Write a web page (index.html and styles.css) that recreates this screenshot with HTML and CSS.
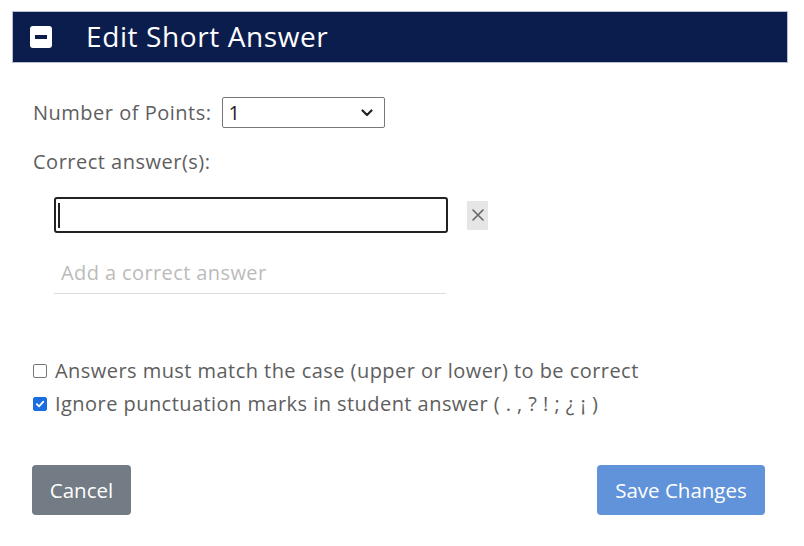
FILE: index.html
```html
<!DOCTYPE html>
<html>
<head>
<meta charset="utf-8">
<link rel="stylesheet" href="styles.css">
</head>
<body>
<div class="dialog">
  <div class="header">
    <span class="collapse"><span class="bar"></span></span>
    <span class="title">Edit Short Answer</span>
  </div>
  <div class="body">
    <div class="row points">
      <label class="label">Number of Points:</label>
      <div class="select">
        <span>1</span>
        <svg class="chev" width="12" height="8" viewBox="0 0 12 8"><path d="M1.5 1.5 L6 6 L10.5 1.5" fill="none" stroke="#222" stroke-width="2.2" stroke-linecap="round" stroke-linejoin="round"/></svg>
      </div>
    </div>
    <div class="label correct">Correct answer(s):</div>
    <div class="answers">
      <div class="answer-row">
        <div class="answer-input"><span class="caret"></span></div>
        <span class="remove"><svg width="12" height="12" viewBox="0 0 12 12"><path d="M1 1 L11 11 M11 1 L1 11" stroke="#666" stroke-width="1.6" stroke-linecap="round"/></svg></span>
      </div>
      <div class="add">Add a correct answer</div>
    </div>
    <div class="checks">
      <label class="check"><span class="box"></span>Answers must match the case (upper or lower) to be correct</label>
      <label class="check"><span class="box on"><svg width="10" height="10" viewBox="0 0 10 10"><path d="M1.8 5.2 L4 7.3 L8.3 2.6" fill="none" stroke="#fff" stroke-width="1.8" stroke-linecap="round" stroke-linejoin="round"/></svg></span>Ignore punctuation marks in student answer ( . , ? ! ; ¿ ¡ )</label>
    </div>
    <div class="actions">
      <button class="btn cancel">Cancel</button>
      <button class="btn save">Save Changes</button>
    </div>
  </div>
</div>
</body>
</html>
```
FILE: styles.css
```css
html, body {
  margin: 0;
  padding: 0;
  background: #fff;
}
body {
  font-family: "Open Sans", "Noto Sans", sans-serif;
  color: #5e5e5e;
}
.dialog {
  padding: 12px 17px 0 13px;
}
.header {
  height: 50px;
  background: #0b1d4d;
  display: flex;
  align-items: center;
  padding-left: 17px;
  box-shadow: 0 0 0 1px #b8c0d0;
}
.collapse {
  width: 22px;
  height: 22px;
  background: #fff;
  border-radius: 3px;
  display: flex;
  align-items: center;
  justify-content: center;
}
.bar {
  width: 12px;
  height: 4px;
  background: #0b1d4d;
}
.title {
  color: #fff;
  font-size: 28px;
  letter-spacing: 0.6px;
  margin-left: 34px;
  line-height: 1;
  margin-top: -2px;
}
.body {
  padding: 35px 0 0 20px;
}
.row {
  display: flex;
  align-items: center;
}
.label {
  font-size: 20px;
  letter-spacing: 0.5px;
  color: #5e5e5e;
}
.select {
  margin-left: 11px;
  height: 29px;
  border: 1px solid #777;
  border-radius: 2px;
  display: flex;
  align-items: center;
  justify-content: space-between;
  padding: 0 11px 0 5px;
  box-sizing: content-box;
  width: 145px;
  font-size: 20px;
  color: #222;
}
.chev {
  display: block;
}
.correct {
  margin-top: 20px;
}
.answers {
  margin-top: 22px;
  padding-left: 21px;
}
.answer-row {
  display: flex;
  align-items: center;
}
.answer-input {
  width: 388px;
  height: 32px;
  border: 2px solid #222;
  border-radius: 3px;
  display: flex;
  align-items: center;
  padding-left: 2px;
}
.caret {
  width: 2px;
  height: 25px;
  background: #222;
}
.remove {
  margin-left: 19px;
  width: 21px;
  height: 29px;
  background: #e6e6e6;
  display: flex;
  align-items: center;
  justify-content: center;
}
.add {
  margin-top: 26px;
  width: 385px;
  padding: 0 0 6px 7px;
  border-bottom: 1px solid #ddd;
  color: #bbb;
  font-size: 20px;
  letter-spacing: 0.4px;
  line-height: 28px;
}
.checks {
  margin-top: 63px;
  display: flex;
  flex-direction: column;
  gap: 6px;
}
.check {
  display: flex;
  align-items: center;
  font-size: 20px;
  letter-spacing: 0.45px;
  line-height: 27px;
  color: #5e5e5e;
}
.box {
  width: 12px;
  height: 12px;
  border: 1px solid #777;
  border-radius: 2px;
  margin-right: 8px;
  display: flex;
  align-items: center;
  justify-content: center;
  flex: none;
}
.box.on {
  background: #1a6fe0;
  border-color: #1a6fe0;
}
.actions {
  margin-top: 48px;
  display: flex;
  justify-content: space-between;
  padding-right: 22px;
}
.btn {
  font-family: "Open Sans", "Noto Sans", sans-serif;
  font-size: 20.5px;
  color: #fff;
  border: none;
  border-radius: 4px;
  height: 50px;
  padding: 0;
  margin-left: -1px;
}
.cancel {
  background: #737b84;
  width: 99px;
}
.save {
  background: #6093d9;
  width: 168px;
}
```
